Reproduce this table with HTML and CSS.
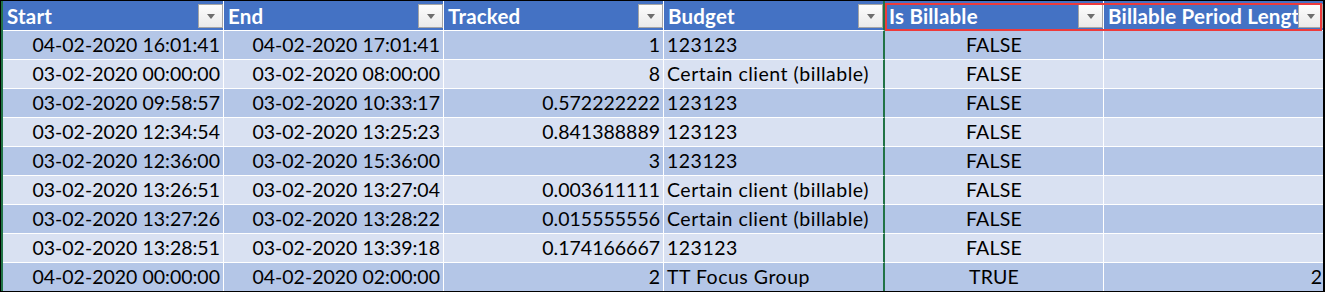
FILE: index.html
```html
<!DOCTYPE html>
<html>
<head>
<meta charset="utf-8">
<link rel="stylesheet" href="styles.css">
</head>
<body>
<div class="sheet">
  <div class="table">
    <div class="row head">
      <div class="cell"><span class="label">Start</span><span class="dd"></span></div>
      <div class="cell"><span class="label">End</span><span class="dd"></span></div>
      <div class="cell"><span class="label">Tracked</span><span class="dd"></span></div>
      <div class="cell"><span class="label">Budget</span><span class="dd"></span></div>
      <div class="cell"><span class="label">Is Billable</span><span class="dd"></span></div>
      <div class="cell"><span class="label">Billable Period Length</span><span class="dd"></span></div>
    </div>
    <div class="row odd">
      <div class="cell r">04-02-2020 16:01:41</div><div class="cell r">04-02-2020 17:01:41</div><div class="cell r">1</div><div class="cell l">123123</div><div class="cell c">FALSE</div><div class="cell r last"></div>
    </div>
    <div class="row even">
      <div class="cell r">03-02-2020 00:00:00</div><div class="cell r">03-02-2020 08:00:00</div><div class="cell r">8</div><div class="cell l">Certain client (billable)</div><div class="cell c">FALSE</div><div class="cell r last"></div>
    </div>
    <div class="row odd">
      <div class="cell r">03-02-2020 09:58:57</div><div class="cell r">03-02-2020 10:33:17</div><div class="cell r">0.572222222</div><div class="cell l">123123</div><div class="cell c">FALSE</div><div class="cell r last"></div>
    </div>
    <div class="row even">
      <div class="cell r">03-02-2020 12:34:54</div><div class="cell r">03-02-2020 13:25:23</div><div class="cell r">0.841388889</div><div class="cell l">123123</div><div class="cell c">FALSE</div><div class="cell r last"></div>
    </div>
    <div class="row odd">
      <div class="cell r">03-02-2020 12:36:00</div><div class="cell r">03-02-2020 15:36:00</div><div class="cell r">3</div><div class="cell l">123123</div><div class="cell c">FALSE</div><div class="cell r last"></div>
    </div>
    <div class="row even">
      <div class="cell r">03-02-2020 13:26:51</div><div class="cell r">03-02-2020 13:27:04</div><div class="cell r">0.003611111</div><div class="cell l">Certain client (billable)</div><div class="cell c">FALSE</div><div class="cell r last"></div>
    </div>
    <div class="row odd">
      <div class="cell r">03-02-2020 13:27:26</div><div class="cell r">03-02-2020 13:28:22</div><div class="cell r">0.015555556</div><div class="cell l">Certain client (billable)</div><div class="cell c">FALSE</div><div class="cell r last"></div>
    </div>
    <div class="row even">
      <div class="cell r">03-02-2020 13:28:51</div><div class="cell r">03-02-2020 13:39:18</div><div class="cell r">0.174166667</div><div class="cell l">123123</div><div class="cell c">FALSE</div><div class="cell r last"></div>
    </div>
    <div class="row odd">
      <div class="cell r">04-02-2020 00:00:00</div><div class="cell r">04-02-2020 02:00:00</div><div class="cell r">2</div><div class="cell l">TT Focus Group</div><div class="cell c">TRUE</div><div class="cell r last">2</div>
    </div>
  </div>
  <div class="mark"></div>
</div>
</body>
</html>
```

FILE: styles.css
```css
* { box-sizing: border-box; }
html, body { margin: 0; padding: 0; background: #fff; }
body { font-family: "Lato", "Liberation Sans", sans-serif; }

.sheet {
  position: relative;
  width: 1325px;
  height: 292px;
  border: 1px solid #000;
  border-right-width: 2px;
  overflow: hidden;
}

.table {
  border-left: 2px solid #217346;
  height: 100%;
}

.row {
  display: grid;
  grid-template-columns: 221px 220px 220px 221px 219px 219px;
}
.row.odd { background: #b4c6e7; }
.row.even { background: #d9e1f2; }
.row.head { background: #4472c4; }

.cell {
  height: 29px;
  border-right: 1px solid #fff;
  border-bottom: 1px solid #fff;
  font-size: 19.5px;
  line-height: 28px;
  color: #000;
  white-space: nowrap;
  overflow: hidden;
}
.cell:nth-child(4) { border-right: 2px solid #217346; }
.cell:nth-child(6) { border-right: 0; }
.row:last-child .cell { height: 28px; border-bottom: 0; }

.r { text-align: right; padding-right: 3px; }
.r.last { padding-right: 1px; }
.l { text-align: left; padding-left: 3px; letter-spacing: 0.5px; }
.c { text-align: center; letter-spacing: 0.2px; }

.head .cell {
  height: 30px;
  display: flex;
  align-items: flex-start;
  color: #fff;
  font-weight: 700;
  font-size: 20.5px;
}
.label {
  flex: 1;
  min-width: 0;
  overflow: hidden;
  white-space: nowrap;
  padding-left: 4px;
  line-height: 29px;
  padding-top: 1px;
  letter-spacing: 0.2px;
}
.dd {
  flex: 0 0 25px;
  width: 25px;
  height: 24px;
  margin-top: 3px;
  border: 1px solid #a5a5a5;
  background: linear-gradient(#fdfdfd, #eaeaea);
  display: flex;
  align-items: center;
  justify-content: center;
}
.dd::after {
  content: "";
  width: 0;
  height: 0;
  border-left: 4.5px solid transparent;
  border-right: 4.5px solid transparent;
  border-top: 5px solid #6e6e6e;
}

.mark {
  position: absolute;
  left: 884px;
  top: 2px;
  width: 437px;
  height: 28px;
  border: 2px solid #ee3a3a;
}
```
